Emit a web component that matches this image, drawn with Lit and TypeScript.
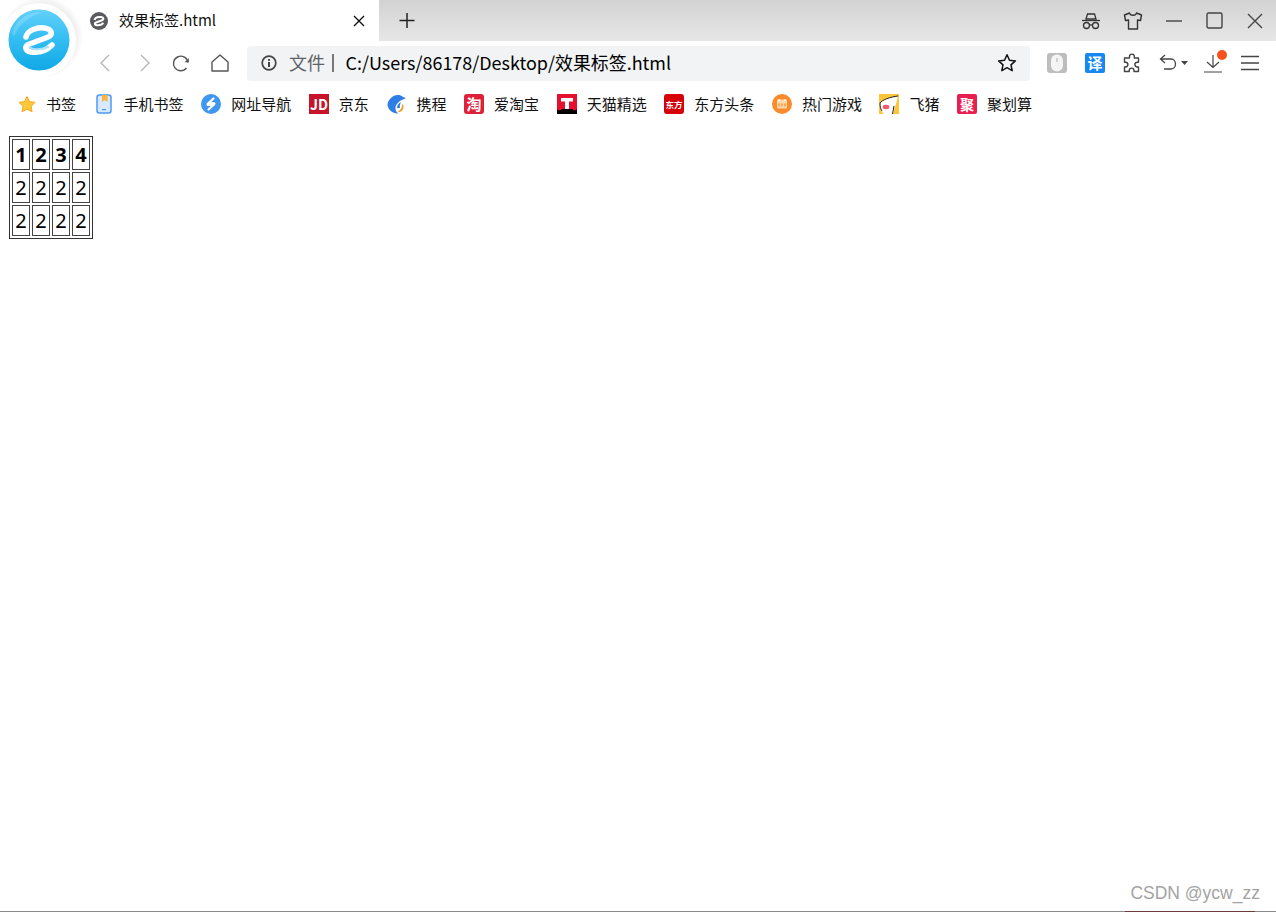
import { LitElement, html, css, svg } from "lit";
import { customElement } from "lit/decorators.js";

const ePath = "M26 37C27 31 36 27 44 28C52 29 54 35 47 37.500L29.500 44C24 46 25 51 31 52C38 53 46 51 52 45";

const marks: [any, string][] = [
  [svg`<path d="M11 2.500l2.500 5.100 5.600.8-4 3.900 1 5.500-5.100-2.600-5 2.600 1-5.500-4-3.900 5.500-.8z" fill="#fdc83a" stroke="#f7a823" stroke-width="1"/>`, "书签"],
  [svg`<rect x="3" y="1" width="14" height="18" rx="2.500" fill="#d9e9fd" stroke="#4c9bf5" stroke-width="1.500"/><path d="M8 1h5.500v7l-2.700-2L8 8z" fill="#f9b43a"/><rect x="8" y="15" width="4" height="1.200" fill="#4c9bf5"/>`, "手机书签"],
  [svg`<circle cx="10" cy="10" r="10" fill="#3f97ef"/><path d="M12.500 4.500L7 9.500c-.8.800-.5 1.500.5 1.500h5M7.500 15.500L13 10.500c.8-.8.500-1.500-.5-1.500h-5" fill="none" stroke="#fff" stroke-width="2.200" stroke-linecap="round"/>`, "网址导航"],
  [svg`<rect width="20" height="20" fill="#c6142b"/><text x="10" y="15.500" text-anchor="middle" class="mk" font-size="14" fill="#fff">JD</text>`, "京东"],
  [svg`<path d="M5 4C8 .5 14 0 17 3l3 1-3 1.500c-1 0-2 .5-3 1.500-3 2-5 5-4.500 8 .3 2 1.500 3.500 3 4.500C7 20 2 16 1.500 11 1.300 8.500 3 6 5 4z" fill="#2f7ee6"/><path d="M11 14c0-3 2-5 4-6-1 2-1.500 4-1 6z" fill="#2f7ee6"/><path d="M11.500 18c3 .5 6-1.500 6-5 0-1.500-.5-2.500-1.500-3 .5 3-1 6-4.500 8z" fill="#f49b25"/>`, "携程"],
  [svg`<rect width="20" height="20" rx="3" fill="#de2138"/><text x="10" y="15.500" text-anchor="middle" class="mk" font-size="15" fill="#fff">淘</text>`, "爱淘宝"],
  [svg`<rect width="20" height="20" fill="#e60f2d"/><path d="M0 15.500l3 1 2-1.500h10l2 1.500 3-1V20H0z" fill="#000"/><path d="M4 4h12v3.500h-4v7.500H8V7.500H4z" fill="#fff"/>`, "天猫精选"],
  [svg`<rect width="20" height="20" rx="3" fill="#d60007"/><text x="10" y="13.500" text-anchor="middle" class="mk" font-size="8.500" fill="#fff">东方</text>`, "东方头条"],
  [svg`<circle cx="10" cy="10" r="10" fill="#fb8a2c"/><rect x="5" y="5.500" width="10" height="9" rx="1" fill="#fdd9a8"/><path d="M7 5v2M13 5v2" stroke="#fff" stroke-width="1.200"/><path d="M7 9.500v3M10 9.500v3M13 9.500v3" stroke="#fb8a2c" stroke-width="1.200"/>`, "热门游戏"],
  [svg`<rect width="20" height="20" fill="#fcc637"/><path d="M1 9C3 6 11 3 19 2c-1 5-3 11-5 18H5C2 18 1 13 1 9z" fill="#fff"/><path d="M1 9C3 6 11 3 19 2M15 12l-1.500 8M1 9c0 3 .5 6 2 8" fill="none" stroke="#222" stroke-width="1"/><ellipse cx="7" cy="13" rx="3.400" ry="2.200" fill="#ef5a6f"/>`, "飞猪"],
  [svg`<rect width="20" height="20" rx="2" fill="#e9204f"/><text x="10" y="16" text-anchor="middle" class="mk" font-size="14" fill="#fff">聚</text>`, "聚划算"],
];

@customElement("app-root")
export class AppRoot extends LitElement {
  static styles = css`
    :host { display: flex; flex-direction: column; position: relative; width: 1276px; height: 912px; background: #fff; overflow: hidden; font-family: "Noto Sans CJK SC", "Noto Sans", sans-serif; }
    svg { display: block; flex: none; }
    .titlebar { display: flex; height: 41px; background: linear-gradient(#d2d2d2, #e7e7e7); }
    .tab { width: 379px; box-sizing: border-box; background: #fff; display: flex; align-items: center; padding-left: 90px; font: 15px "Noto Sans CJK SC", "Noto Sans", sans-serif; color: #111; }
    .tab-title { margin-left: 11px; width: 234px; padding-bottom: 2px; }
    .plus { margin-left: 20px; }
    .win { margin-left: auto; display: flex; align-items: center; padding-right: 13px; gap: 20px; }
    .win .glasses { margin-right: 1px; }
    .win .min { margin-left: 3px; }
    .win .max { margin-left: 4px; }
    .win .close { margin-left: 4px; }
    .toolbar { display: grid; grid-template-columns: 85px 40px 40px 32px 46px 4px 783px 1fr; height: 44px; align-items: center; }
    .nav { display: flex; justify-content: center; }
    .col2 { grid-column: 2; }
    .col3 { grid-column: 3; }
    .col4 { grid-column: 4; }
    .col5 { grid-column: 5; }
    .address { grid-column: 7; height: 35px; background: #f1f3f4; border-radius: 4px; display: flex; align-items: center; padding-left: 14px; padding-right: 13px; }
    .file { margin-left: 12px; color: #5f6368; font: 18px "Noto Sans CJK SC", "Noto Sans", sans-serif; padding-bottom: 2px; }
    .sep { margin-left: 7px; width: 1.500px; height: 18px; background: #777; }
    .url { margin-left: 12px; flex: 1; color: #000; font: 17.950px "Noto Sans CJK SC", "Noto Sans", sans-serif; white-space: nowrap; padding-bottom: 2px; }
    .tools { display: flex; align-items: center; padding-left: 17px; gap: 17px; }
    .tools .translate { margin-left: 1px; }
    .tools .dl { margin-left: -5px; }
    .tools .menu { margin-left: -5px; }
    .bookmarks { display: flex; height: 38px; align-items: center; padding-left: 16px; gap: 17.600px; font: 15px "Noto Sans CJK SC", "Noto Sans", sans-serif; color: #111; }
    .bm { display: flex; align-items: center; gap: 10px; white-space: nowrap; }
    .bm span { padding-bottom: 2px; }
    .mk { font-family: "Noto Sans CJK SC", "Liberation Sans", sans-serif; font-weight: 700; }
    .content { flex: 1; display: flex; flex-direction: column; padding: 13px 0 0 9px; }
    table { border: 1px solid #333; border-spacing: 2px; width: 84px; height: 103px; box-sizing: border-box; border-collapse: separate; font: 20px "Noto Sans", sans-serif; color: #000; }
    td, th { border: 1px solid #444; padding: 0; width: 18px; height: 31px; box-sizing: border-box; text-align: center; line-height: 1; }
    th { font-weight: 700; }
    .watermark { margin-top: auto; align-self: flex-end; margin-right: 16px; margin-bottom: 7px; font: 17.500px "Liberation Sans", sans-serif; color: #a3a3a3; }
    .baseline { height: 1px; background: #8a8a8a; margin-left: -9px; display: flex; }
    .baseline i { margin-left: 1125px; width: 130px; background: #6d3b3b; }
    .logo { position: absolute; left: -8px; top: -7px; width: 94px; height: 94px; }
  `;

  private tableRows() {
    return html`<table>
      <tr><th>1</th><th>2</th><th>3</th><th>4</th></tr>
      ${[0, 1].map(() => html`<tr><td>2</td><td>2</td><td>2</td><td>2</td></tr>`)}
    </table>`;
  }

  render() {
    return html`
      <div class="titlebar">
        <div class="tab">
          <svg width="18" height="18" viewBox="0 0 18 18"><circle cx="9" cy="9" r="9" fill="#5b5b5f"/><path d="M4.500 8C5 5.500 8 4.700 11 5C14 5.400 14 7.500 12 8.300L6 10.500C4 11.300 4.500 13 7 13.200C9.500 13.400 12 12.500 13.500 11" fill="none" stroke="#fff" stroke-width="2"/></svg>
          <span class="tab-title">效果标签.html</span>
          <svg width="12" height="12" viewBox="0 0 12 12"><path d="M1 1l10 10M11 1L1 11" stroke="#111" stroke-width="1.400"/></svg>
        </div>
        <svg class="plus" width="16" height="41" viewBox="0 0 16 41"><path d="M8 13v15M.500 20.500h15" stroke="#222" stroke-width="1.500"/></svg>
        <div class="win">
          <svg class="glasses" width="22" height="22" viewBox="0 0 22 22" fill="none" stroke="#333" stroke-width="1.300"><path d="M6 9l1.500-5h7L16 9z"/><path d="M2 10.500h18"/><circle cx="6.500" cy="15.500" r="3"/><circle cx="15.500" cy="15.500" r="3"/><path d="M9.500 15h3"/></svg>
          <svg width="20" height="20" viewBox="0 0 20 20" fill="none" stroke="#333" stroke-width="1.400" stroke-linejoin="round"><path d="M6.500 2L1.500 4l1 5.500 3-.5V18h9V9l3 .5 1-5.500-5-2c-.5 3-6.500 3-7 0z"/></svg>
          <svg class="min" width="16" height="16" viewBox="0 0 16 16"><path d="M0 8h16" stroke="#444" stroke-width="1.400"/></svg>
          <svg class="max" width="17" height="17" viewBox="0 0 17 17"><rect x="1" y="1" width="15" height="15" rx="1.500" fill="none" stroke="#444" stroke-width="1.400"/></svg>
          <svg class="close" width="16" height="16" viewBox="0 0 16 16"><path d="M1 1l14 14M15 1L1 15" stroke="#444" stroke-width="1.400"/></svg>
        </div>
      </div>
      <div class="toolbar">
        <div class="nav col2"><svg width="12" height="18" viewBox="0 0 12 18"><path d="M10 1L2 9l8 8" fill="none" stroke="#b5b5b5" stroke-width="1.300"/></svg></div>
        <div class="nav col3"><svg width="12" height="18" viewBox="0 0 12 18"><path d="M2 1l8 8-8 8" fill="none" stroke="#b5b5b5" stroke-width="1.300"/></svg></div>
        <div class="nav col4"><svg width="18" height="18" viewBox="0 0 18 18" fill="none" stroke="#555" stroke-width="1.400"><path d="M16 8.500A7.300 7.300 0 1 0 14.500 14"/><path d="M12.500 8.200h4.300V4z" fill="#555" stroke="none"/></svg></div>
        <div class="nav col5"><svg width="18" height="18" viewBox="0 0 18 18"><path d="M1 8L9 1l8 7v9H1z" fill="none" stroke="#555" stroke-width="1.400" stroke-linejoin="round"/></svg></div>
        <div class="address">
          <svg width="16" height="16" viewBox="0 0 16 16"><circle cx="8" cy="8" r="6.800" fill="none" stroke="#444" stroke-width="1.700"/><rect x="7" y="7" width="2" height="5" fill="#444"/><rect x="7" y="4" width="2" height="1.800" fill="#444"/></svg>
          <span class="file">文件</span><span class="sep"></span>
          <span class="url">C:/Users/86178/Desktop/效果标签.html</span>
          <svg width="20" height="20" viewBox="0 0 20 20"><path d="M10 1.800l2.500 5.400 5.900.7-4.400 4 1.200 5.800-5.200-3-5.200 3L6 11.900l-4.400-4 5.900-.7z" fill="none" stroke="#111" stroke-width="1.500" stroke-linejoin="round"/></svg>
        </div>
        <div class="tools">
          <svg width="20" height="20" viewBox="0 0 20 20"><rect width="20" height="20" rx="3" fill="#bdbdbd"/><rect x="4" y="1.500" width="12" height="17" rx="6" fill="#f4f4f4"/><rect x="9.200" y="5" width="1.600" height="4" rx=".8" fill="#c4c4c4"/></svg>
          <svg class="translate" width="20" height="20" viewBox="0 0 20 20"><rect width="20" height="20" rx="2" fill="#1588f4"/><text x="10" y="15.500" text-anchor="middle" class="mk" font-size="15" fill="#fff">译</text></svg>
          <svg width="20" height="20" viewBox="0 0 20 20"><path d="M7.500 3.500a2.400 2.400 0 0 1 4.800 0V5h4.200v4.200h-1.200a2.400 2.400 0 0 0 0 4.800h1.200v4.500H12v-1a2.400 2.400 0 0 0-4.800 0v1H2.500V14h1a2.400 2.400 0 0 0 0-4.800h-1V5h5z" fill="none" stroke="#444" stroke-width="1.400" stroke-linejoin="round"/></svg>
          <svg width="32" height="20" viewBox="0 0 32 20"><path d="M6 2L1.500 6 6 10M2 6h10c6 0 6 10 0 10H5" fill="none" stroke="#444" stroke-width="1.300"/><path d="M22 8h7l-3.500 4z" fill="#444"/></svg>
          <svg class="dl" width="26" height="26" viewBox="0 0 26 26"><path d="M10 5v12M4 12l6 5.500L16 12M1 22h18" fill="none" stroke="#444" stroke-width="1.200"/><circle cx="19" cy="5" r="5" fill="#f4511e"/></svg>
          <svg class="menu" width="18" height="16" viewBox="0 0 18 16"><path d="M0 1.500h18M0 8h18M0 14.500h18" stroke="#444" stroke-width="1.300"/></svg>
        </div>
      </div>
      <div class="bookmarks">
        ${marks.map(([m, t]) => html`<div class="bm"><svg width="20" height="20" viewBox="0 0 20 20">${m}</svg><span>${t}</span></div>`)}
      </div>
      <div class="content">
        ${this.tableRows()}
        <div class="watermark">CSDN @ycw_zz</div>
        <div class="baseline"><i></i></div>
      </div>
      <svg class="logo" viewBox="-8 -7 94 94">
        <defs>
          <linearGradient id="lg" x1="0" y1="0" x2="0" y2="1"><stop offset="0" stop-color="#62d0fa"/><stop offset=".5" stop-color="#33bdf2"/><stop offset="1" stop-color="#0fa9e6"/></linearGradient>
          <radialGradient id="hl" cx=".5" cy=".5" r=".5"><stop offset=".8" stop-color="#000" stop-opacity=".07"/><stop offset="1" stop-color="#000" stop-opacity="0"/></radialGradient>
        </defs>
        <circle cx="42" cy="37" r="41" fill="url(#hl)"/>
        <circle cx="39" cy="40" r="37" fill="#fff"/>
        <circle cx="39" cy="40" r="30.500" fill="url(#lg)"/>
        <path d="M12 33C16 19 28 12 42 12C30 16 20 23 14 36z" fill="#fff" opacity=".18"/>
        <path d="${ePath}" fill="none" stroke="#fff" stroke-width="5.500" stroke-linecap="round"/>
        <path d="M30 47.500C33 50 42 50 48 47" fill="none" stroke="#a8e3fa" stroke-width="2" stroke-linecap="round"/>
      </svg>
    `;
  }
}
